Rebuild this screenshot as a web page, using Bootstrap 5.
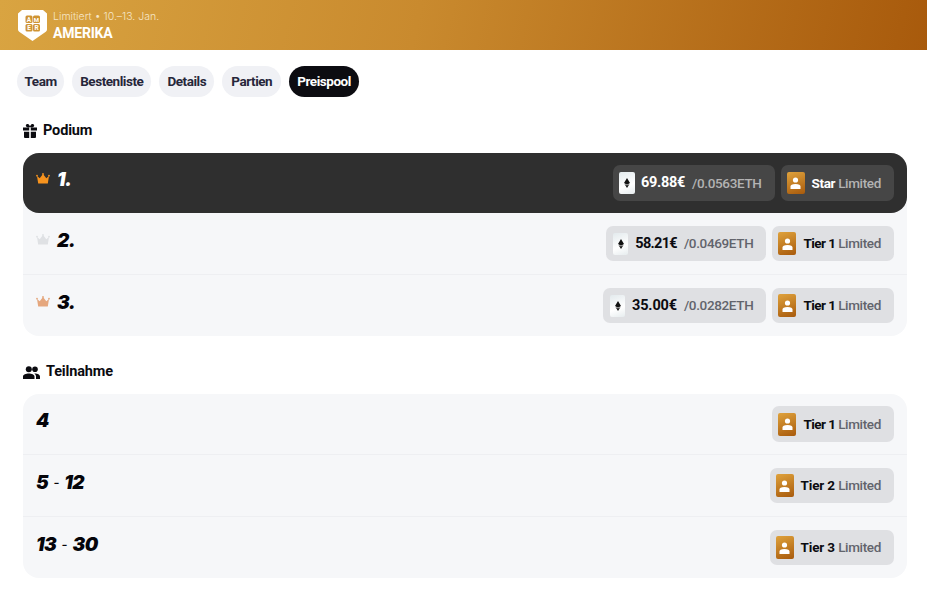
<!DOCTYPE html>
<html lang="de">
<head>
<meta charset="utf-8">
<title>Amerika</title>
<link href="https://cdn.jsdelivr.net/npm/bootstrap@5.3.0/dist/css/bootstrap.min.css" rel="stylesheet">
<style>
body{font-family:"Roboto","Liberation Sans",sans-serif;background:#fff;color:#0b0b10}
.hero-bar{height:50px;padding-left:18px;gap:6px;background:linear-gradient(103deg,#d9a441 0%,#c98a2e 45%,#a85a0c 100%)}
.hero-copy{padding-top:2px}
.hero-sub{font-size:10.5px;line-height:14px;color:#f6e6c8;font-family:"Inter",sans-serif;font-weight:300}
.hero-name{font-size:14px;line-height:18px;font-weight:700;color:#fff;letter-spacing:-.2px}
.tab-strip{padding:16px 17px 0;gap:8px}
.tab-pill{height:31px;padding:0 8px;border-radius:16px;background:#f0f1f5;color:#26263a;font-size:13.5px;font-weight:700;line-height:31px;letter-spacing:-.45px}
.tab-team{padding:0 7.5px}
.tab-partien{padding:0 9px}
.tab-on{background:#0c0c11;color:#fff}
.sect-title{padding-left:23px;font-size:14.5px;font-weight:700;gap:6px;line-height:20px;color:#0b0b10;letter-spacing:-.15px}
.sect-a{margin-top:24px}
.sect-b{margin-top:26px}
.rank-list{margin:12px 20px 0 23px;border-radius:16px;background:#f6f7f9}
.rank-row{height:61px;padding:13px 13px 0;border-bottom:1px solid #eeeff2}
.rank-row:nth-child(2){height:62px}
.rank-row:last-child{border-bottom:0}
.rank-top{height:60px;padding-top:12px;background:#2f2f2f;border-radius:16px;border-bottom:0}
.rank-num{font-family:"Inter",sans-serif;font-weight:900;font-style:italic;font-size:19px;line-height:24px;color:#05050a;letter-spacing:-.5px;margin-top:3px}
.rank-row:first-child .rank-num{margin-top:2px}
.rank-row .rank-medal,.rank-row:first-child .rank-medal{gap:7px;margin-top:3px}
.rank-medal svg{margin-top:-4px}
.rank-top .rank-num{color:#fff}
.rank-dash{font-size:13px;font-weight:500;font-style:normal;margin:0 2px;position:relative;top:-2px}
.chip{height:35px;padding:0 13px 0 6px;border-radius:7px;background:#dfe0e3;font-size:13.5px;font-weight:700;gap:6px;color:#0b0b10;white-space:nowrap;letter-spacing:-.35px}
.chip-eth{padding-left:7px}
.rank-top .chip{height:36px;background:#464646;color:#fff}
.rank-top .chip-eth{padding-left:6px}
.chip-tall{height:36px;margin-top:-1px}
.chip-soft{font-weight:500;color:#62646c}
.rank-top .chip-soft{color:#b3b3b3}
.eth-rate{margin-left:1px}
.eth-tile{width:15px;height:22px;border-radius:2px;background:linear-gradient(160deg,#e3eaed,#fff 60%,#e6ecee);margin-right:1px}
.rank-top .eth-tile{width:16px;margin-right:0}
.card-tile{width:18px;height:23px;border-radius:2px;background:linear-gradient(160deg,#dfa23c,#a85a0c);margin-right:1px}
.rank-top .card-tile{height:22px}
.amount{font-size:14.5px;letter-spacing:-.3px}
.amount-tight{letter-spacing:-.7px}
.amount-loose{letter-spacing:-.15px}
.tier-tight{letter-spacing:-.55px}
.tier-loose{letter-spacing:-.15px}
.chips{gap:6px}
</style>
</head>
<body>
<header class="hero-bar d-flex align-items-center">
  <svg width="29" height="31" viewBox="0 0 29 31" aria-hidden="true"><path d="M4 0H25L29 3.500V19.500Q29 21 27.800 21.700L14.500 31 1.200 21.700Q0 21 0 19.500V3.500Z" fill="#fff"/><rect x="7.500" y="5.500" width="7" height="7.500" rx="1.500" fill="#cf9434"/><rect x="15" y="5.500" width="7" height="7.500" rx="1.500" fill="#cf9434"/><rect x="7.500" y="14" width="7" height="7.500" rx="1.500" fill="#cf9434"/><rect x="15" y="14" width="7" height="7.500" rx="1.500" fill="#cf9434"/><text x="11" y="11.800" font-size="6.500" font-weight="700" text-anchor="middle" fill="#fff" font-family="Roboto">A</text><text x="18.500" y="11.800" font-size="6" font-weight="700" text-anchor="middle" fill="#fff" font-family="Roboto">M</text><text x="11" y="20.300" font-size="6.500" font-weight="700" text-anchor="middle" fill="#fff" font-family="Roboto">E</text><text x="18.500" y="20.300" font-size="6.500" font-weight="700" text-anchor="middle" fill="#fff" font-family="Roboto">R</text></svg>
  <div class="hero-copy">
    <div class="hero-sub">Limitiert • 10.–13. Jan.</div>
    <div class="hero-name">AMERIKA</div>
  </div>
</header>

<nav class="tab-strip d-flex">
  <div class="tab-pill tab-team">Team</div>
  <div class="tab-pill">Bestenliste</div>
  <div class="tab-pill">Details</div>
  <div class="tab-pill tab-partien">Partien</div>
  <div class="tab-pill tab-on">Preispool</div>
</nav>

<h2 class="sect-title sect-a d-flex align-items-center mb-0">
  <svg width="14" height="14" viewBox="1 1 14 14" fill="#0b0b10" aria-hidden="true"><path d="M1 4.500h6.200v3H1zM8.800 4.500H15v3H8.800zM2 8.700h5.200V15H3a1 1 0 0 1-1-1zM8.800 8.700H14V14a1 1 0 0 1-1 1H8.800zM8 4.200C6.500 4.300 4 4.400 3.800 2.800 3.700 1.400 5.300.6 6.500 1.300 7.200 1.700 7.700 2.600 8 3.400c.3-.8.800-1.700 1.500-2.100 1.200-.7 2.800.1 2.700 1.500-.2 1.600-2.700 1.500-4.200 1.400z"/></svg>
  Podium
</h2>
<section class="rank-list">
  <div class="rank-row rank-top d-flex justify-content-between">
    <div class="rank-num rank-medal d-flex align-items-center align-self-start"><svg width="14" height="11" viewBox="0 0 14 11" aria-hidden="true"><g fill="#f7931e"><path d="M1 3 3.700 5.300 7 1l3.300 4.300L13 3l-1.200 7.500H2.200z"/><circle cx="1" cy="2.700" r=".9"/><circle cx="7" cy="1" r=".9"/><circle cx="13" cy="2.700" r=".9"/></g></svg><span>1.</span></div>
    <div class="chips d-flex">
      <div class="chip chip-eth d-flex align-items-center"><span class="eth-tile d-flex align-items-center justify-content-center"><svg width="6" height="10" viewBox="0 0 6 10" aria-hidden="true"><path d="M3 0 6 5 3 6.800 0 5zM.5 6 3 7.500 5.500 6 3 10z" fill="#111"/></svg></span><span class="amount">69.88€</span><span class="chip-soft eth-rate">/0.0563ETH</span></div>
      <div class="chip d-flex align-items-center"><span class="card-tile d-flex align-items-center justify-content-center"><svg width="11" height="12" viewBox="0 0 11 12" aria-hidden="true"><circle cx="5.500" cy="3" r="2.600" fill="#fff"/><path d="M.5 12V9.500C.5 8 2 7 5.500 7s5 1 5 2.500V12z" fill="#fff"/></svg></span><span>Star <span class="chip-soft">Limited</span></span></div>
    </div>
  </div>
  <div class="rank-row d-flex justify-content-between">
    <div class="rank-num rank-medal d-flex align-items-center align-self-start"><svg width="14" height="11" viewBox="0 0 14 11" aria-hidden="true"><g fill="#dfe1e4"><path d="M1 3 3.700 5.300 7 1l3.300 4.300L13 3l-1.200 7.500H2.200z"/><circle cx="1" cy="2.700" r=".9"/><circle cx="7" cy="1" r=".9"/><circle cx="13" cy="2.700" r=".9"/></g></svg><span>2.</span></div>
    <div class="chips d-flex">
      <div class="chip chip-eth d-flex align-items-center"><span class="eth-tile d-flex align-items-center justify-content-center"><svg width="6" height="10" viewBox="0 0 6 10" aria-hidden="true"><path d="M3 0 6 5 3 6.800 0 5zM.5 6 3 7.500 5.500 6 3 10z" fill="#111"/></svg></span><span class="amount amount-tight">58.21€</span><span class="chip-soft eth-rate">/0.0469ETH</span></div>
      <div class="chip d-flex align-items-center"><span class="card-tile d-flex align-items-center justify-content-center"><svg width="11" height="12" viewBox="0 0 11 12" aria-hidden="true"><circle cx="5.500" cy="3" r="2.600" fill="#fff"/><path d="M.5 12V9.500C.5 8 2 7 5.500 7s5 1 5 2.500V12z" fill="#fff"/></svg></span><span><span class="tier-tight">Tier 1 </span><span class="chip-soft">Limited</span></span></div>
    </div>
  </div>
  <div class="rank-row d-flex justify-content-between">
    <div class="rank-num rank-medal d-flex align-items-center align-self-start"><svg width="14" height="11" viewBox="0 0 14 11" aria-hidden="true"><g fill="#e5a77e"><path d="M1 3 3.700 5.300 7 1l3.300 4.300L13 3l-1.200 7.500H2.200z"/><circle cx="1" cy="2.700" r=".9"/><circle cx="7" cy="1" r=".9"/><circle cx="13" cy="2.700" r=".9"/></g></svg><span>3.</span></div>
    <div class="chips d-flex">
      <div class="chip chip-eth d-flex align-items-center"><span class="eth-tile d-flex align-items-center justify-content-center"><svg width="6" height="10" viewBox="0 0 6 10" aria-hidden="true"><path d="M3 0 6 5 3 6.800 0 5zM.5 6 3 7.500 5.500 6 3 10z" fill="#111"/></svg></span><span class="amount amount-loose">35.00€</span><span class="chip-soft eth-rate">/0.0282ETH</span></div>
      <div class="chip d-flex align-items-center"><span class="card-tile d-flex align-items-center justify-content-center"><svg width="11" height="12" viewBox="0 0 11 12" aria-hidden="true"><circle cx="5.500" cy="3" r="2.600" fill="#fff"/><path d="M.5 12V9.500C.5 8 2 7 5.500 7s5 1 5 2.500V12z" fill="#fff"/></svg></span><span><span class="tier-tight">Tier 1 </span><span class="chip-soft">Limited</span></span></div>
    </div>
  </div>
</section>

<h2 class="sect-title sect-b d-flex align-items-center mb-0">
  <svg width="17" height="13" viewBox="0 0 17 13" fill="#0b0b10" aria-hidden="true"><circle cx="5.800" cy="3.300" r="3"/><circle cx="12" cy="3.300" r="2.800"/><path d="M0 13v-2.500C0 8.500 3 7.500 5.800 7.500s5.700 1 5.700 3V13zM13 13v-2.500c0-1.200-.6-2.200-1.700-3 .3 0 .6 0 1 0 2.200 0 4.700 1 4.700 3V13z"/></svg>
  Teilnahme
</h2>
<section class="rank-list">
  <div class="rank-row d-flex justify-content-between">
    <div class="rank-num align-self-start">4</div>
    <div class="chips d-flex">
      <div class="chip chip-tall d-flex align-items-center"><span class="card-tile d-flex align-items-center justify-content-center"><svg width="11" height="12" viewBox="0 0 11 12" aria-hidden="true"><circle cx="5.500" cy="3" r="2.600" fill="#fff"/><path d="M.5 12V9.500C.5 8 2 7 5.500 7s5 1 5 2.500V12z" fill="#fff"/></svg></span><span><span class="tier-tight">Tier 1 </span><span class="chip-soft">Limited</span></span></div>
    </div>
  </div>
  <div class="rank-row d-flex justify-content-between">
    <div class="rank-num align-self-start">5 <span class="rank-dash">-</span> 12</div>
    <div class="chips d-flex">
      <div class="chip d-flex align-items-center"><span class="card-tile d-flex align-items-center justify-content-center"><svg width="11" height="12" viewBox="0 0 11 12" aria-hidden="true"><circle cx="5.500" cy="3" r="2.600" fill="#fff"/><path d="M.5 12V9.500C.5 8 2 7 5.500 7s5 1 5 2.500V12z" fill="#fff"/></svg></span><span><span class="tier-loose">Tier 2 </span><span class="chip-soft">Limited</span></span></div>
    </div>
  </div>
  <div class="rank-row d-flex justify-content-between">
    <div class="rank-num align-self-start">13 <span class="rank-dash">-</span> 30</div>
    <div class="chips d-flex">
      <div class="chip d-flex align-items-center"><span class="card-tile d-flex align-items-center justify-content-center"><svg width="11" height="12" viewBox="0 0 11 12" aria-hidden="true"><circle cx="5.500" cy="3" r="2.600" fill="#fff"/><path d="M.5 12V9.500C.5 8 2 7 5.500 7s5 1 5 2.500V12z" fill="#fff"/></svg></span><span><span class="tier-loose">Tier 3 </span><span class="chip-soft">Limited</span></span></div>
    </div>
  </div>
</section>
<script src="https://cdn.jsdelivr.net/npm/bootstrap@5.3.0/dist/js/bootstrap.bundle.min.js"></script>
</body>
</html>
